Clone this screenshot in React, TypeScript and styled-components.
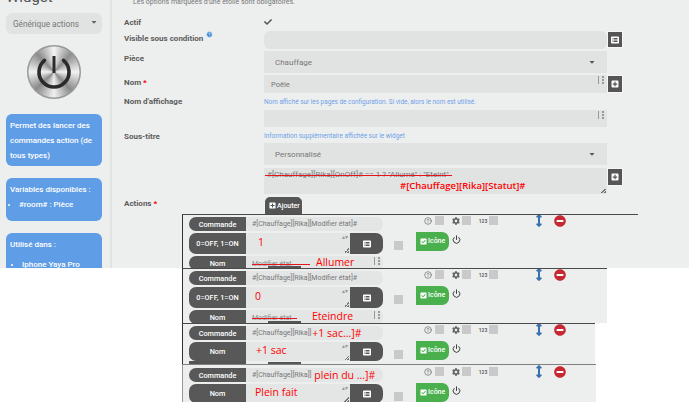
import React from "react";
import styled, { createGlobalStyle } from "styled-components";
import { FaArrowsAltV, FaMinusCircle, FaPlusSquare, FaCheckSquare, FaListAlt, FaCog, FaCheck, FaCaretDown } from "react-icons/fa";
import { Power, CircleHelp } from "lucide-react";

const Global = createGlobalStyle`
  html, body { margin: 0; padding: 0; overflow: hidden; background: #fff; }
  * { box-sizing: border-box; }
  body { font-family: Roboto, "Liberation Sans", sans-serif; }
`;

const Page = styled.div`
  width: 689px; height: 402px; overflow: hidden; display: flex;
  background: linear-gradient(#edefef 268px, #fff 268px);
`;
const Sidebar = styled.aside`
  width: 112px; height: 268px; flex: none; overflow: hidden; padding: 0 8px 0 6px;
  border-right: 2px solid #e2e4e4;
`;
const Title = styled.h2`
  margin: -11px 0 8px; font: 400 15px/16px Roboto, sans-serif; color: #555;
`;
const SideSelect = styled.div`
  height: 21px; border-radius: 6px; background: #e1e2e2; display: flex; align-items: center;
  justify-content: space-between; padding: 0 4px 0 7px; font-size: 8.2px; color: #777;
  svg { width: 8px; height: 8px; color: #666; margin-bottom: 3px; }
`;
const Knob = styled.div`
  width: 54px; height: 54px; border-radius: 50%; margin: 11px auto 15px; display: flex; align-items: center; justify-content: center;
  background: conic-gradient(#f4f4f4, #8e8e8e 12%, #f2f2f2 25%, #8a8a8a 38%, #f0f0f0 50%, #8a8a8a 63%, #f2f2f2 75%, #8c8c8c 88%, #f4f4f4);
  box-shadow: inset 0 0 0 1.5px #9a9a9a;
`;
const InfoBox = styled.div<{ $h: number }>`
  height: ${p => p.$h}px; flex: none; margin-bottom: 12px; border-radius: 6px; background: #5f9de6; color: #fff;
  padding: 4px 4px; font-size: 8px; font-weight: 500; line-height: 15px;
`;
const InfoList = styled.ul<{ $pl: number; $mt?: number }>`
  margin: ${p => p.$mt ?? 0}px 0 0; padding: 0 0 0 ${p => p.$pl}px;
`;
const Main = styled.main`
  flex: 1; min-width: 0; padding-left: 12px; display: flex; flex-direction: column;
`;
const Notice = styled.div`
  height: 6px; margin: 0 0 10px 9px; font-size: 7px; line-height: 5px; color: #777; white-space: nowrap;
`;
const FormRow = styled.div<{ $h: number; $mb?: number }>`
  display: flex; height: ${p => p.$h}px; margin-bottom: ${p => p.$mb ?? 2}px; width: 498px; flex: none;
`;
const Label = styled.label<{ $pt?: number }>`
  width: 140px; flex: none; font-size: 8px; font-weight: 700; color: #5c5c5c; display: block; line-height: 11px; padding-top: ${p => p.$pt ?? 2}px;
  b { color: #f00; }
`;
const HelpMark = styled.span`
  position: relative; top: -3px; margin-left: 1px;
  svg { width: 7px; height: 7px; color: #fff; fill: #3e86d6; }
`;
const Field = styled.div<{ $round?: boolean }>`
  width: 343px; flex: none; height: 100%; background: #e1e2e2; border-radius: ${p => (p.$round ? "6px" : "0")};
  color: #777; font-size: 7.5px; display: flex; align-items: center; padding: 0 7px; position: relative;
`;
const SelectField = styled(Field)`
  padding: 0 11px; justify-content: space-between; font-size: 8px;
  svg { width: 8px; height: 8px; color: #555; }
`;
const Hint = styled.div<{ $pt?: number }>`
  flex: 1; font-size: 6.4px; color: #6d9fe8; line-height: 10px; padding-top: ${p => p.$pt ?? 4}px; white-space: nowrap;
`;
const CheckMark = styled.span`
  display: flex; margin-top: 3px; color: #555;
  svg { width: 8px; height: 8px; }
`;
const SqButton = styled.div<{ $h: number }>`
  width: 16px; height: ${p => p.$h}px; flex: none; background: #555; border: 1px solid #f6f6f6; display: flex; align-items: center; justify-content: center; color: #fff;
  svg { width: 8px; height: 8px; }
`;
const Cursor = styled.span`
  position: absolute; right: 3px; top: 1px; width: 6px; height: 8px; border-left: 1px solid #999; border-right: 2px dotted #999;
`;
const Grip = styled.span`
  position: absolute; right: 1px; bottom: 1px; width: 5px; height: 5px;
  background: linear-gradient(135deg, transparent 50%, #777 50%, #777 62%, transparent 62%, transparent 78%, #777 78%);
`;
const StruckCode = styled.span`
  position: relative; font-size: 8px; line-height: 10px; align-self: flex-start; margin-top: 2px; color: #777; white-space: nowrap; margin-left: -4px;
  &::after { content: ""; position: absolute; left: -2px; width: 187px; top: 5px; height: 1px; background: #e8141c; }
`;
const Status = styled.span`
  position: absolute; left: 136px; top: 11px; font: 600 9.5px/14px "Open Sans", sans-serif; color: #f00; white-space: nowrap;
`;
const AddButton = styled.div`
  width: 39px; height: 18px; margin-left: 140px; background: #555; border-radius: 6px 6px 0 0; color: #fff; flex: none;
  font-size: 7px; font-weight: 500; display: flex; align-items: center; gap: 1px; padding-left: 4px;
  border: 1px solid #f2f2f2; border-bottom: 0;
  svg { width: 7px; height: 7px; }
`;
const ActionRow = styled.section<{ $w: number; $h: number; $soft?: boolean; $pt: number }>`
  position: relative; width: ${p => p.$w}px; height: ${p => p.$h}px; flex: none; margin-left: 58px; background: #edefef; overflow: hidden;
  border-top: 1.5px solid ${p => (p.$soft ? "#808080" : "#4a4a4a")};
  border-left: 1px solid ${p => (p.$soft ? "#999" : "#333")}; display: flex; padding: ${p => p.$pt}px 0 0 6px;
`;
const Tab = styled.span`
  position: absolute; left: 85px; bottom: 0; width: 33px; height: 2px; background: #555;
`;
const CmdColumn = styled.div`
  width: 194px; flex: none; display: flex; flex-direction: column; gap: 2px;
`;
const CmdLine = styled.div<{ $h: number }>`
  display: flex; height: ${p => p.$h}px; flex: none;
`;
const CmdLabel = styled.div`
  width: 57px; flex: none; background: #585858; color: #fff; border-radius: 7px 0 0 7px;
  font-size: 7.3px; font-weight: 500; display: flex; align-items: center; justify-content: center; white-space: nowrap;
`;
const CmdValue = styled.div<{ $r?: boolean }>`
  flex: 1; min-width: 0; background: #e4e5e5; color: #777; font-size: 7px; padding: 0 6px; display: flex; align-items: center;
  border-radius: 0 ${p => (p.$r ? "6px 6px" : "0 0")} 0; position: relative; white-space: nowrap;
`;
const ValueButton = styled.div`
  width: 33px; flex: none; background: #555; border-radius: 0 7px 7px 0; color: #fff; display: flex; align-items: center; justify-content: center;
  svg { width: 8px; height: 8px; }
`;
const Red = styled.span<{ $ml?: number; $mt?: number }>`
  color: #f00; font: 400 10.5px/12px "Open Sans", sans-serif; margin-left: ${p => p.$ml ?? 0}px; margin-top: ${p => p.$mt ?? 0}px; white-space: nowrap;
`;
const Struck = styled.span<{ $w: number }>`
  position: relative; flex: none; width: ${p => p.$w}px; color: #888; font-size: 7px; top: 1px;
  &::after { content: ""; position: absolute; left: 0; right: 0; top: 4px; height: 1px; background: #e8141c; }
`;
const Spin = styled.span`
  position: absolute; right: 2px; top: 2px; width: 6px; height: 9px; color: #999; font-size: 6px; line-height: 4px; text-align: center;
`;
const Stub = styled.div`
  width: 57px; height: 4px; margin-top: -2px; background: #555; flex: none;
`;
const RightColumn = styled.div`
  margin-left: 11px; width: 230px; flex: none; display: flex; flex-direction: column; gap: 4px;
`;
const Options = styled.div`
  display: flex; align-items: center; height: 13px; padding-left: 30px; margin-top: -3px; color: #777;
`;
const OptIcon = styled.span<{ $ml?: number }>`
  display: flex; width: 8px; flex: none; justify-content: center; font-size: 5px; font-weight: 700; color: #666; margin-left: ${p => p.$ml ?? 0}px;
  svg { width: 8px; height: 8px; flex: none; }
`;
const Box = styled.span<{ $ml?: number }>`
  width: 9px; height: 9px; flex: none; background: #c9c9c9; margin-left: ${p => p.$ml ?? 0}px;
`;
const Mover = styled.span`
  color: #3a70ae; margin-left: 37px; display: flex;
  svg { width: 8px; height: 13px; }
`;
const Remove = styled.span`
  color: #c52a34; margin-left: 11px; display: flex; background: radial-gradient(#fff 45%, transparent 50%); border-radius: 50%;
  svg { width: 12px; height: 12px; }
`;
const Controls = styled.div`
  display: flex; align-items: center; height: 20px;
`;
const IconButton = styled.div`
  width: 33px; height: 19px; margin-left: 13px; background: #4aaf4d; color: #fff; border-radius: 0 7px 7px 0; font-size: 7px; font-weight: 500;
  display: flex; align-items: center; gap: 1px; padding-left: 4px;
  svg { width: 7px; height: 7px; }
`;
const PowerMark = styled.span`
  display: flex; margin-left: 3px; color: #333; margin-top: -3px;
  svg { width: 9px; height: 9px; }
`;
const Bump = styled.div`
  margin-top: 8px; display: flex;
`;

const Btn = () => <ValueButton><FaListAlt /></ValueButton>;

type RowProps = {
  w: number; h: number; pt?: number; soft?: boolean; cmd: React.ReactNode; valueLabel: string; valueH?: number; value: React.ReactNode; nom?: React.ReactNode; stub?: boolean;
};
const Row = ({ w, h, pt = 2, soft, cmd, valueLabel, valueH = 21, value, nom, stub }: RowProps) => (
  <ActionRow $w={w} $h={h} $pt={pt} $soft={soft}>
    <CmdColumn>
      <CmdLine $h={14}><CmdLabel>Commande</CmdLabel><CmdValue $r>{cmd}</CmdValue></CmdLine>
      <CmdLine $h={valueH}><CmdLabel>{valueLabel}</CmdLabel><CmdValue>{value}<Spin>▴▾</Spin><Grip /></CmdValue><Btn /></CmdLine>
      {nom && <CmdLine $h={14}><CmdLabel>Nom</CmdLabel><CmdValue $r>{nom}<Cursor /></CmdValue></CmdLine>}
      {stub && <Stub />}
    </CmdColumn>
    <RightColumn>
      <Options>
        <OptIcon><CircleHelp /></OptIcon><Box $ml={3} />
        <OptIcon $ml={8}><FaCog /></OptIcon><Box $ml={2} />
        <OptIcon $ml={8}>123</OptIcon><Box $ml={2} />
        <Mover><FaArrowsAltV /></Mover><Remove><FaMinusCircle /></Remove>
      </Options>
      <Controls>
        <Bump><Box /></Bump>
        <IconButton><FaCheckSquare />Icône</IconButton>
        <PowerMark><Power strokeWidth={2.5} /></PowerMark>
      </Controls>
    </RightColumn>
    {!soft && <Tab />}
  </ActionRow>
);

const Modified = ({ text, w, ml }: { text: string; w: number; ml: number }) => (
  <><Struck $w={w}>Modifier état</Struck><Red $ml={ml} $mt={-3}>{text}</Red></>
);

export default function App() {
  return (
    <Page>
      <Global />
      <Sidebar>
        <Title>Widget</Title>
        <SideSelect>Générique actions<FaCaretDown /></SideSelect>
        <Knob>
          <svg width="40" height="40" viewBox="0 0 40 40" fill="none" stroke="#2b2b2b" strokeWidth="3.6" strokeLinecap="round">
            <path d="M10.5 8.4A15 15 0 1 0 29.5 8.4" />
            <path d="M20 4V21" strokeWidth="3" strokeLinecap="butt" />
          </svg>
        </Knob>
        <InfoBox $h={52}>Permet des lancer des commandes action (de tous types)</InfoBox>
        <InfoBox $h={43}>Variables disponibles :<InfoList $pl={9}><li>#room# : Pièce</li></InfoList></InfoBox>
        <InfoBox $h={60}>Utilisé dans :<InfoList $pl={12} $mt={5}><li>Iphone Yaya Pro</li></InfoList></InfoBox>
      </Sidebar>
      <Main>
        <Notice>Les options marquées d'une étoile sont obligatoires.</Notice>
        <FormRow $h={16} $mb={0}>
          <Label>Actif</Label>
          <CheckMark><FaCheck /></CheckMark>
        </FormRow>
        <FormRow $h={18} $mb={2}>
          <Label>Visible sous condition <HelpMark><CircleHelp /></HelpMark></Label>
          <Field $round /><SqButton $h={17}><FaListAlt /></SqButton>
        </FormRow>
        <FormRow $h={22}>
          <Label>Pièce</Label>
          <SelectField>Chauffage<FaCaretDown /></SelectField>
        </FormRow>
        <FormRow $h={18} $mb={0}>
          <Label>Nom <b>*</b></Label>
          <Field>Poêle<Cursor /></Field><SqButton $h={18}><FaPlusSquare /></SqButton>
        </FormRow>
        <FormRow $h={17} $mb={0}>
          <Label $pt={3}>Nom d'affichage</Label>
          <Hint>Nom affiché sur les pages de configuration. Si vide, alors le nom est utilisé.</Hint>
        </FormRow>
        <FormRow $h={17} $mb={4}>
          <Label />
          <Field><Cursor /></Field>
        </FormRow>
        <FormRow $h={12} $mb={0}>
          <Label $pt={0}>Sous-titre</Label>
          <Hint $pt={0}>Information supplémentaire affichée sur le widget</Hint>
        </FormRow>
        <FormRow $h={22} $mb={3}>
          <Label />
          <SelectField>Personnalisé<FaCaretDown /></SelectField>
        </FormRow>
        <FormRow $h={26} $mb={2}>
          <Label />
          <Field>
            <StruckCode>#[Chauffage][Rika][OnOff]# == 1 ? "Allumé" : "Eteint"</StruckCode>
            <Status>#[Chauffage][Rika][Statut]#</Status>
            <Grip />
          </Field>
          <SqButton $h={18}><FaPlusSquare /></SqButton>
        </FormRow>
        <FormRow $h={0} $mb={0}>
          <Label>Actions <b>*</b></Label>
        </FormRow>
        <AddButton><FaPlusSquare />Ajouter</AddButton>
        <Row w={456} h={54} cmd="#[Chauffage][Rika][Modifier état]#" valueLabel="0=OFF, 1=ON" value={<Red $ml={6} $mt={-4}>1</Red>} nom={<Modified text="Allumer" w={58} ml={6} />} />
        <Row w={425} h={55} cmd="#[Chauffage][Rika][Modifier état]#" valueLabel="0=OFF, 1=ON" value={<Red $ml={3} $mt={-4}>0</Red>} nom={<Modified text="Eteindre" w={45} ml={15} />} />
        <Row w={413} h={41} cmd={<>#[Chauffage][Rika]] <Red $ml={1}>+1 sac...]#</Red></>} valueLabel="Nom" valueH={19} value={<Red $ml={4} $mt={-4}>+1 sac</Red>} stub />
        <Row w={414} h={60} pt={3} soft cmd={<>#[Chauffage][Rika]] <Red $ml={3}>plein du ...]#</Red></>} valueLabel="Nom" valueH={19} value={<Red $ml={3} $mt={-3}>Plein fait</Red>} />
      </Main>
    </Page>
  );
}
